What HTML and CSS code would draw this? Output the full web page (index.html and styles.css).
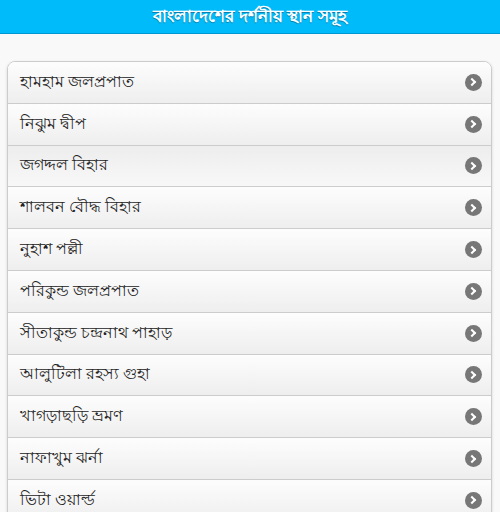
FILE: index.html
```html
<!DOCTYPE html>
<html>
	<head>
		<meta charset="UTF-8">
		<title>বাংলাদেশের দর্শনীয় স্থান সমূহ</title>
		<link rel="stylesheet" href="styles.css">
	</head>
	<body>
		<div class="header">বাংলাদেশের দর্শনীয় স্থান সমূহ</div>
		<div class="content">
			<ul class="list">
				<li><a href="#">হামহাম জলপ্রপাত<span class="arrow"></span></a></li>
				<li><a href="#">নিঝুম দ্বীপ<span class="arrow"></span></a></li>
				<li class="hover"><a href="#">জগদ্দল বিহার<span class="arrow"></span></a></li>
				<li><a href="#">শালবন বৌদ্ধ বিহার<span class="arrow"></span></a></li>
				<li><a href="#">নুহাশ পল্লী<span class="arrow"></span></a></li>
				<li><a href="#">পরিকুন্ড জলপ্রপাত<span class="arrow"></span></a></li>
				<li><a href="#">সীতাকুন্ড চন্দ্রনাথ পাহাড়<span class="arrow"></span></a></li>
				<li><a href="#">আলুটিলা রহস্য গুহা<span class="arrow"></span></a></li>
				<li><a href="#">খাগড়াছড়ি ভ্রমণ<span class="arrow"></span></a></li>
				<li><a href="#">নাফাখুম ঝর্না<span class="arrow"></span></a></li>
				<li><a href="#">ভিটা ওয়ার্ল্ড<span class="arrow"></span></a></li>
			</ul>
		</div>
	</body>
</html>
```
FILE: styles.css
```css
* {
	margin: 0;
	padding: 0;
}

body {
	background: #f9f9f9;
	font-family: "Noto Sans", "DejaVu Sans", sans-serif;
	font-size: 16px;
	color: #222;
}

.header {
	height: 33px;
	line-height: 32px;
	background: #00bbf9;
	border-bottom: 1px solid #0096d6;
	color: #fff;
	font-size: 17px;
	font-weight: bold;
	text-align: center;
	text-shadow: 0 1px 0 #0a7fb0;
}

.content {
	padding: 27px 8px 0 7px;
}

.list {
	list-style: none;
	border: 1px solid #ccc;
	border-radius: 8px;
	overflow: hidden;
	box-shadow: 0 1px 3px rgba(0, 0, 0, 0.15);
}

.list li {
	border-top: 1px solid #ccc;
}

.list li:first-child {
	border-top: 0;
}

.list a {
	display: flex;
	align-items: center;
	justify-content: space-between;
	height: 40.8px;
	padding: 0 9px 0 12px;
	background: linear-gradient(#fdfdfd, #eee);
	color: #222;
	text-decoration: none;
}

.list .hover a {
	background: linear-gradient(#ededed, #f8f8f8);
}

.arrow {
	width: 17px;
	height: 17px;
	border-radius: 50%;
	background: #777;
	position: relative;
}

.arrow::after {
	content: "";
	position: absolute;
	left: 4px;
	top: 5.5px;
	width: 4px;
	height: 4px;
	border-top: 2px solid #fff;
	border-right: 2px solid #fff;
	transform: rotate(45deg);
}
```
